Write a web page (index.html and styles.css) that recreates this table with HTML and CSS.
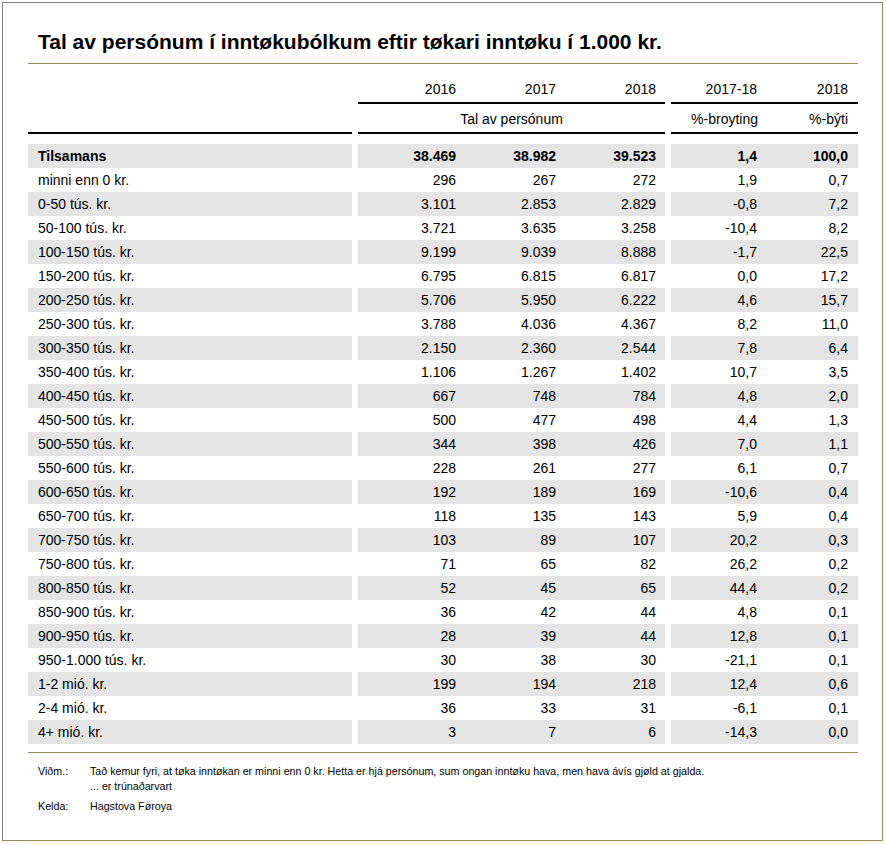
FILE: index.html
```html
<!DOCTYPE html>
<html>
<head>
<meta charset="utf-8">
<link rel="stylesheet" href="styles.css">
</head>
<body>
<div class="frame">
  <h1 class="title">Tal av persónum í inntøkubólkum eftir tøkari inntøku í 1.000 kr.</h1>
  <div class="rule"></div>
  <table class="tbl">
    <colgroup>
      <col class="c-label"><col class="c-gap"><col class="c-d1"><col class="c-d"><col class="c-d"><col class="c-gap"><col class="c-p1"><col class="c-p2">
    </colgroup>
    <thead>
      <tr class="h1">
        <th class="empty"></th><th class="gap"></th>
        <th class="ln">2016</th><th class="ln">2017</th><th class="ln">2018</th>
        <th class="gap"></th>
        <th class="ln">2017-18</th><th class="ln">2018</th>
      </tr>
      <tr class="h2">
        <th class="ln"></th><th class="gap"></th>
        <th class="ln center" colspan="3">Tal av persónum</th>
        <th class="gap"></th>
        <th class="ln">%-broyting</th><th class="ln">%-býti</th>
      </tr>
      <tr class="sp"><td colspan="8"></td></tr>
    </thead>
    <tbody>
      <tr class="g total"><td class="lab">Tilsamans</td><td class="gap"></td><td>38.469</td><td>38.982</td><td>39.523</td><td class="gap"></td><td>1,4</td><td>100,0</td></tr>
      <tr><td class="lab">minni enn 0 kr.</td><td class="gap"></td><td>296</td><td>267</td><td>272</td><td class="gap"></td><td>1,9</td><td>0,7</td></tr>
      <tr class="g"><td class="lab">0-50 tús. kr.</td><td class="gap"></td><td>3.101</td><td>2.853</td><td>2.829</td><td class="gap"></td><td>-0,8</td><td>7,2</td></tr>
      <tr><td class="lab">50-100 tús. kr.</td><td class="gap"></td><td>3.721</td><td>3.635</td><td>3.258</td><td class="gap"></td><td>-10,4</td><td>8,2</td></tr>
      <tr class="g"><td class="lab">100-150 tús. kr.</td><td class="gap"></td><td>9.199</td><td>9.039</td><td>8.888</td><td class="gap"></td><td>-1,7</td><td>22,5</td></tr>
      <tr><td class="lab">150-200 tús. kr.</td><td class="gap"></td><td>6.795</td><td>6.815</td><td>6.817</td><td class="gap"></td><td>0,0</td><td>17,2</td></tr>
      <tr class="g"><td class="lab">200-250 tús. kr.</td><td class="gap"></td><td>5.706</td><td>5.950</td><td>6.222</td><td class="gap"></td><td>4,6</td><td>15,7</td></tr>
      <tr><td class="lab">250-300 tús. kr.</td><td class="gap"></td><td>3.788</td><td>4.036</td><td>4.367</td><td class="gap"></td><td>8,2</td><td>11,0</td></tr>
      <tr class="g"><td class="lab">300-350 tús. kr.</td><td class="gap"></td><td>2.150</td><td>2.360</td><td>2.544</td><td class="gap"></td><td>7,8</td><td>6,4</td></tr>
      <tr><td class="lab">350-400 tús. kr.</td><td class="gap"></td><td>1.106</td><td>1.267</td><td>1.402</td><td class="gap"></td><td>10,7</td><td>3,5</td></tr>
      <tr class="g"><td class="lab">400-450 tús. kr.</td><td class="gap"></td><td>667</td><td>748</td><td>784</td><td class="gap"></td><td>4,8</td><td>2,0</td></tr>
      <tr><td class="lab">450-500 tús. kr.</td><td class="gap"></td><td>500</td><td>477</td><td>498</td><td class="gap"></td><td>4,4</td><td>1,3</td></tr>
      <tr class="g"><td class="lab">500-550 tús. kr.</td><td class="gap"></td><td>344</td><td>398</td><td>426</td><td class="gap"></td><td>7,0</td><td>1,1</td></tr>
      <tr><td class="lab">550-600 tús. kr.</td><td class="gap"></td><td>228</td><td>261</td><td>277</td><td class="gap"></td><td>6,1</td><td>0,7</td></tr>
      <tr class="g"><td class="lab">600-650 tús. kr.</td><td class="gap"></td><td>192</td><td>189</td><td>169</td><td class="gap"></td><td>-10,6</td><td>0,4</td></tr>
      <tr><td class="lab">650-700 tús. kr.</td><td class="gap"></td><td>118</td><td>135</td><td>143</td><td class="gap"></td><td>5,9</td><td>0,4</td></tr>
      <tr class="g"><td class="lab">700-750 tús. kr.</td><td class="gap"></td><td>103</td><td>89</td><td>107</td><td class="gap"></td><td>20,2</td><td>0,3</td></tr>
      <tr><td class="lab">750-800 tús. kr.</td><td class="gap"></td><td>71</td><td>65</td><td>82</td><td class="gap"></td><td>26,2</td><td>0,2</td></tr>
      <tr class="g"><td class="lab">800-850 tús. kr.</td><td class="gap"></td><td>52</td><td>45</td><td>65</td><td class="gap"></td><td>44,4</td><td>0,2</td></tr>
      <tr><td class="lab">850-900 tús. kr.</td><td class="gap"></td><td>36</td><td>42</td><td>44</td><td class="gap"></td><td>4,8</td><td>0,1</td></tr>
      <tr class="g"><td class="lab">900-950 tús. kr.</td><td class="gap"></td><td>28</td><td>39</td><td>44</td><td class="gap"></td><td>12,8</td><td>0,1</td></tr>
      <tr><td class="lab">950-1.000 tús. kr.</td><td class="gap"></td><td>30</td><td>38</td><td>30</td><td class="gap"></td><td>-21,1</td><td>0,1</td></tr>
      <tr class="g"><td class="lab">1-2 mió. kr.</td><td class="gap"></td><td>199</td><td>194</td><td>218</td><td class="gap"></td><td>12,4</td><td>0,6</td></tr>
      <tr><td class="lab">2-4 mió. kr.</td><td class="gap"></td><td>36</td><td>33</td><td>31</td><td class="gap"></td><td>-6,1</td><td>0,1</td></tr>
      <tr class="g"><td class="lab">4+ mió. kr.</td><td class="gap"></td><td>3</td><td>7</td><td>6</td><td class="gap"></td><td>-14,3</td><td>0,0</td></tr>
    </tbody>
  </table>
  <div class="rule rule-bottom"></div>
  <div class="notes">
    <div class="note">
      <span class="nl">Viðm.:</span>
      <div class="nt">
        <div>Tað kemur fyri, at tøka inntøkan er minni enn 0 kr. Hetta er hjá persónum, sum ongan inntøku hava, men hava ávís gjøld at gjalda.</div>
        <div>... er trúnaðarvart</div>
      </div>
    </div>
    <div class="note">
      <span class="nl">Kelda:</span>
      <div class="nt">Hagstova Føroya</div>
    </div>
  </div>
</div>
</body>
</html>
```

FILE: styles.css
```css
html, body {
  margin: 0;
  padding: 0;
  background: #ffffff;
}
body {
  padding: 2px;
  font-family: "Liberation Sans", Arial, sans-serif;
  color: #000;
}
.frame {
  box-sizing: border-box;
  width: 881px;
  height: 839px;
  border-left: 1px solid #7f7f7f;
  border-top: 1px solid #7f7f7f;
  border-right: 1px solid #978b4f;
  border-bottom: 1px solid #978b4f;
  padding: 0 0 0 25px;
}
.title {
  margin: 0;
  padding: 27px 0 0 10px;
  font-size: 21px;
  line-height: 24px;
  font-weight: bold;
}
.rule {
  width: 830px;
  height: 1px;
  background: #978b4f;
  margin-top: 9px;
}
.tbl {
  border-collapse: collapse;
  table-layout: fixed;
  width: 830px;
  font-size: 14px;
}
.c-label { width: 324px; }
.c-gap { width: 6px; }
.c-d1 { width: 107px; }
.c-d { width: 100px; }
.c-p1 { width: 96px; }
.c-p2 { width: 91px; }
.tbl th {
  font-weight: normal;
  text-align: right;
  padding: 0 9px 0 0;
  line-height: 16px;
  vertical-align: bottom;
}
.tbl th.center { text-align: center; padding: 0 0 5px 0; }
.tbl th.gap, .tbl td.gap { padding: 0; background: transparent; }
.h1 th { height: 39px; padding-bottom: 5px; box-sizing: border-box; }
.h1 th.ln { border-bottom: 2px solid #000; }
.h2 th { height: 30px; padding-bottom: 5px; box-sizing: border-box; }
.h2 th.ln { border-bottom: 2px solid #000; }
.tbl th:last-child, .tbl td:last-child { padding-right: 10px; }
.h1 th:nth-child(7), .h2 th:nth-child(7) { padding-right: 10px; }
.sp td { height: 10px; padding: 0; }
.tbl tbody td {
  height: 24px;
  padding: 0 9px 0 0;
  text-align: right;
  line-height: 16px;
  vertical-align: middle;
}
.tbl tbody td:nth-child(7) { padding-right: 10px; }
.tbl tbody td.lab {
  text-align: left;
  padding-left: 10px;
}
.tbl tbody tr.g td { background: #e4e4e4; }
.tbl tbody tr.g td.gap { background: transparent; }
.total td { font-weight: bold; }
.rule-bottom { margin-top: 8px; }
.notes {
  padding: 11px 0 0 10px;
  font-size: 10.7px;
  line-height: 15px;
}
.note {
  display: flex;
  margin-bottom: 5px;
}
.nl { width: 52px; flex: none; }
```
